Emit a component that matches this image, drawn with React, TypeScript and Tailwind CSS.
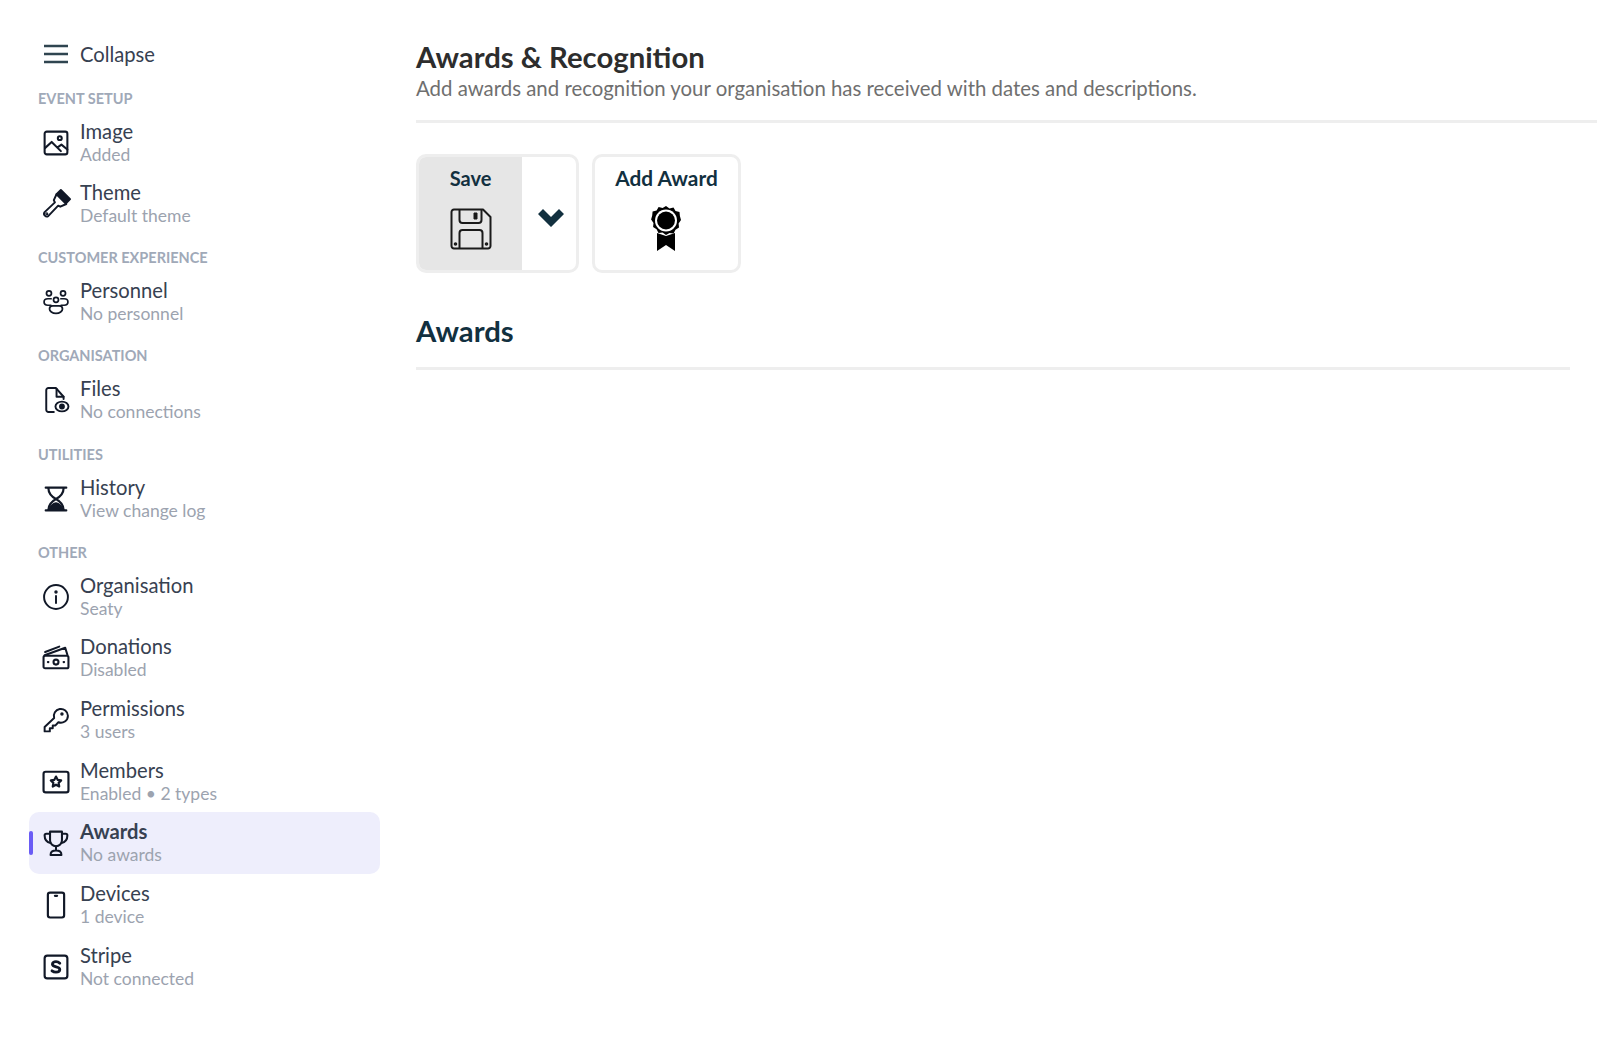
import type { ReactNode } from "react";

const ic = "w-[26px] h-[26px] shrink-0 overflow-visible";

function Svg({ children, sw = 1.6 }: { children: ReactNode; sw?: number }) {
  return (
    <svg
      viewBox="0 0 24 24"
      fill="none"
      stroke="#111827"
      strokeWidth={sw}
      strokeLinecap="round"
      strokeLinejoin="round"
      className={ic}
    >
      {children}
    </svg>
  );
}

const icons: Record<string, ReactNode> = {
  image: (
    <Svg sw={1.9}>
      <rect x="1.500" y="1.500" width="21" height="21" rx="2" />
      <circle cx="15.500" cy="7.500" r="1.800" />
      <path d="M2 16.500l6-5.500 8.500 8.500M13.500 16l3.500-2.500 5.500 4.500" />
    </Svg>
  ),
  theme: (
    <Svg sw={1.8}>
      <path d="M16.500 -1l8.500 8.500-4 4-8.500-8.500z" fill="#111827" />
      <path d="M12.500 3l-2.500 5.500 1 2-9.500 9a2.500 2.500 0 0 0 3.500 3.500l9-9.500 2 1 5.500-2.500" />
      <circle cx="3.500" cy="21" r=".5" fill="#111827" />
    </Svg>
  ),
  personnel: (
    <Svg sw={1.6}>
      <circle cx="5.500" cy="4" r="2.300" />
      <circle cx="18.500" cy="4" r="2.300" />
      <circle cx="12" cy="10" r="2.300" />
      <path d="M7.500 9H4.500c-2.200 0-3.500 1.300-3.500 3s1.500 3 3.500 3h2.800M16.500 9h3c2.200 0 3.500 1.300 3.500 3s-1.500 3-3.500 3h-2.800" />
      <path d="M9 15.500h6c1.800 0 3 1.200 3 3s-2.500 4-6 4-6-2.200-6-4 1.200-3 3-3z" />
    </Svg>
  ),
  files: (
    <Svg sw={1.8}>
      <path d="M10 23H5a2 2 0 0 1-2-2V3a2 2 0 0 1 2-2h7l7 8v2" />
      <path d="M12.500 1.500V9H19" />
      <ellipse cx="17.500" cy="18" rx="6" ry="4.500" fill="#fff" />
      <circle cx="17.500" cy="18" r="1.800" fill="#111827" />
    </Svg>
  ),
  history: (
    <Svg sw={2}>
      <path d="M2.500 1.500h19M2.500 22.500h19" />
      <path d="M5 2c0 5.500 3.500 8 7 10 3.500-2 7-4.500 7-10M5 22c0-5.500 3.500-8 7-10 3.500 2 7 4.500 7 10" />
      <path d="M6 22c.5-3 3.500-5.500 6-6 2.500.5 5.500 3 6 6z" fill="#111827" />
    </Svg>
  ),
  organisation: (
    <Svg sw={1.8}>
      <circle cx="12" cy="12" r="11" />
      <path d="M12 11v6.500" />
      <circle cx="12" cy="7.300" r=".7" fill="#111827" />
    </Svg>
  ),
  donations: (
    <Svg sw={1.9}>
      <rect x="0.500" y="10" width="23" height="11.500" rx="1.500" />
      <circle cx="12" cy="15.800" r="2.300" />
      <path d="M4.500 15.800h.5M19 15.800h.5" />
      <path d="M1.500 9.500L20.500 2.500l2 6.500M2 6.500L15 1.500" />
    </Svg>
  ),
  permissions: (
    <Svg sw={1.8}>
      <path d="M23 8a6.500 6.500 0 0 1-8.800 6.100L11.500 17H9v2.700H6.300v2.800H1.500v-4l8.800-8.300A6.500 6.500 0 1 1 23 8z" />
      <circle cx="17.500" cy="6.500" r=".7" fill="#111827" />
    </Svg>
  ),
  members: (
    <Svg sw={2}>
      <rect x="0.500" y="2.500" width="23" height="19" rx="2" />
      <path d="M12 7l1.500 3 3.300.5-2.400 2.300.6 3.400-3-1.700-3 1.700.6-3.400-2.400-2.300 3.300-.5z" />
    </Svg>
  ),
  awards: (
    <Svg sw={1.9}>
      <path d="M6.500 1.500h11v8a5.500 5.500 0 0 1-11 0z" />
      <path d="M6.500 3.500H3c-1 0-1.500.6-1.500 1.500 0 3.500 2 6.200 5.500 7M17.500 3.500H21c1 0 1.500.6 1.500 1.500 0 3.500-2 6.200-5.500 7" />
      <path d="M12 15v4M7 23c0-2.500 1.500-4 5-4s5 1.500 5 4z" />
    </Svg>
  ),
  devices: (
    <Svg sw={2}>
      <rect x="4.500" y="0.500" width="15" height="23" rx="2" />
      <path d="M11 3.500h2" />
    </Svg>
  ),
  stripe: (
    <Svg sw={2}>
      <rect x="1.500" y="1.500" width="21" height="21" rx="2.500" />
      <path
        d="M15.500 8.500C14.500 7.500 13.300 7 12 7c-2 0-3.300 1-3.300 2.500 0 3.200 6.800 1.600 6.800 4.800 0 1.500-1.500 2.500-3.500 2.500-1.300 0-2.700-.5-3.700-1.300"
        strokeWidth="2.600"
      />
    </Svg>
  ),
};

type Item = { key: string; title: string; sub: string; active?: boolean };

const sections: { label: string; items: Item[] }[] = [
  {
    label: "EVENT SETUP",
    items: [
      { key: "image", title: "Image", sub: "Added" },
      { key: "theme", title: "Theme", sub: "Default theme" },
    ],
  },
  {
    label: "CUSTOMER EXPERIENCE",
    items: [{ key: "personnel", title: "Personnel", sub: "No personnel" }],
  },
  {
    label: "ORGANISATION",
    items: [{ key: "files", title: "Files", sub: "No connections" }],
  },
  {
    label: "UTILITIES",
    items: [{ key: "history", title: "History", sub: "View change log" }],
  },
  {
    label: "OTHER",
    items: [
      { key: "organisation", title: "Organisation", sub: "Seaty" },
      { key: "donations", title: "Donations", sub: "Disabled" },
      { key: "permissions", title: "Permissions", sub: "3 users" },
      { key: "members", title: "Members", sub: "Enabled • 2 types" },
      { key: "awards", title: "Awards", sub: "No awards", active: true },
      { key: "devices", title: "Devices", sub: "1 device" },
      { key: "stripe", title: "Stripe", sub: "Not connected" },
    ],
  },
];

function NavRow({ item }: { item: Item }) {
  return (
    <div
      className={`relative flex h-[61.65px] items-center gap-[11px] rounded-[10px] pl-[14px] ${
        item.active ? "bg-[#eeeefc]" : ""
      }`}
    >
      {item.active && (
        <span className="absolute left-0 top-[19px] h-[24px] w-[4px] rounded-[2px] bg-[#6a5cf5]" />
      )}
      {icons[item.key]}
      <div className="flex flex-col">
        <span
          className={`text-[20.200px] leading-[23px] text-[#374151] ${
            item.active ? "font-bold" : ""
          }`}
        >
          {item.title}
        </span>
        <span className="text-[17.500px] leading-[23px] text-[#9ca3af]">
          {item.sub}
        </span>
      </div>
    </div>
  );
}

export default function App() {
  return (
    <div className="flex min-h-[1046px] bg-white font-['Lato',sans-serif]">
      <aside className="ml-[29px] w-[351px] shrink-0 pt-[38px]">
        <div className="mb-[5.200px] flex h-[32px] items-center gap-[11px] pl-[14px]">
          <svg
            viewBox="0 0 26 26"
            fill="none"
            stroke="#2f4550"
            strokeWidth="2.400"
            className={ic}
          >
            <path d="M1 5h24M1 13h24M1 21h24" />
          </svg>
          <span className="text-[20.200px] text-[#374151]">Collapse</span>
        </div>
        {sections.map((s) => (
          <div key={s.label}>
            <div className="flex h-[36.5px] items-center pl-[9px] pt-[10px] text-[14.500px] font-bold text-[#a0a9b8]">
              {s.label}
            </div>
            {s.items.map((i) => (
              <NavRow key={i.key} item={i} />
            ))}
          </div>
        ))}
      </aside>

      <main className="ml-[36px] flex-1 pt-[39px]">
        <h1 className="text-[29.300px] font-bold leading-[36px] text-[#2d2d2d]">
          Awards &amp; Recognition
        </h1>
        <p className="text-[20.400px] leading-[26px] text-[#6f6f6f]">
          Add awards and recognition your organisation has received with dates
          and descriptions.
        </p>
        <div className="mt-[19px] h-[3px] bg-[#eeeeee]" />

        <div className="mt-[31px] flex gap-[13px]">
          <div className="flex h-[119px] w-[163px] overflow-hidden rounded-[10px] border-[3px] border-[#eeeeee]">
            <div className="flex w-[103px] flex-col items-center bg-[#e6e6e6] pt-[7px]">
              <span className="text-[20px] font-bold leading-[28px] text-[#12303f]">
                Save
              </span>
              <svg
                viewBox="0 0 42 42"
                fill="none"
                stroke="#1a1a1a"
                strokeWidth="2"
                strokeLinejoin="round"
                className="mt-[16px] h-[42px] w-[42px]"
              >
                <path d="M4 1.500h29l7.500 7.500v29a2.500 2.500 0 0 1-2.500 2.500H4A2.500 2.500 0 0 1 1.500 38V4A2.500 2.500 0 0 1 4 1.500z" />
                <path d="M9.500 2v10a3 3 0 0 0 3 3h16a3 3 0 0 0 3-3V2" />
                <rect x="24" y="5" width="3" height="6" fill="#1a1a1a" strokeWidth="1" />
                <path d="M9.500 40V25a3 3 0 0 1 3-3h17a3 3 0 0 1 3 3v15" />
                <circle cx="5.500" cy="36" r=".8" fill="#1a1a1a" />
                <circle cx="36.500" cy="36" r=".8" fill="#1a1a1a" />
              </svg>
            </div>
            <div className="flex flex-1 items-center justify-center pl-[3px] pt-[8px]">
              <svg viewBox="0 0 26 18" className="h-[18px] w-[26px]" fill="#12303f">
                <path d="M0 5l5-5 8 8 8-8 5 5-13 13z" />
              </svg>
            </div>
          </div>
          <div className="flex h-[119px] w-[149px] flex-col items-center rounded-[10px] border-[3px] border-[#eeeeee] pt-[7px]">
            <span className="text-[20.800px] font-bold leading-[28px] text-[#12303f]">
              Add Award
            </span>
            <svg viewBox="0 0 30 46" className="mr-[2px] mt-[14px] h-[46px] w-[30px]">
              <path
                fill="#000"
                d="M15 0l3.500 2.500 4-1 2 3.600 4 .8.400 4.100 1.100 4-2.400 3.500.4 4.100-3.500 2.200-1.900 3.700-4-.6L15 29l-3.500-2.600-4 .6-1.900-3.700-3.500-2.200.4-4.100L.1 13.500l1.100-4 .4-4.100 4-.8 2-3.600 4 1z"
              />
              <circle cx="15" cy="14.500" r="11" fill="#fff" />
              <circle cx="15" cy="14.500" r="9" fill="#000" />
              <path fill="#000" d="M6 27l9 3 9-3v18l-9-6-9 6z" />
            </svg>
          </div>
        </div>

        <h2 className="mt-[40px] text-[29.300px] font-bold leading-[36px] text-[#12303f]">
          Awards
        </h2>
        <div className="mt-[18px] h-[3px] w-[1154px] bg-[#eeeeee]" />
      </main>
    </div>
  );
}
